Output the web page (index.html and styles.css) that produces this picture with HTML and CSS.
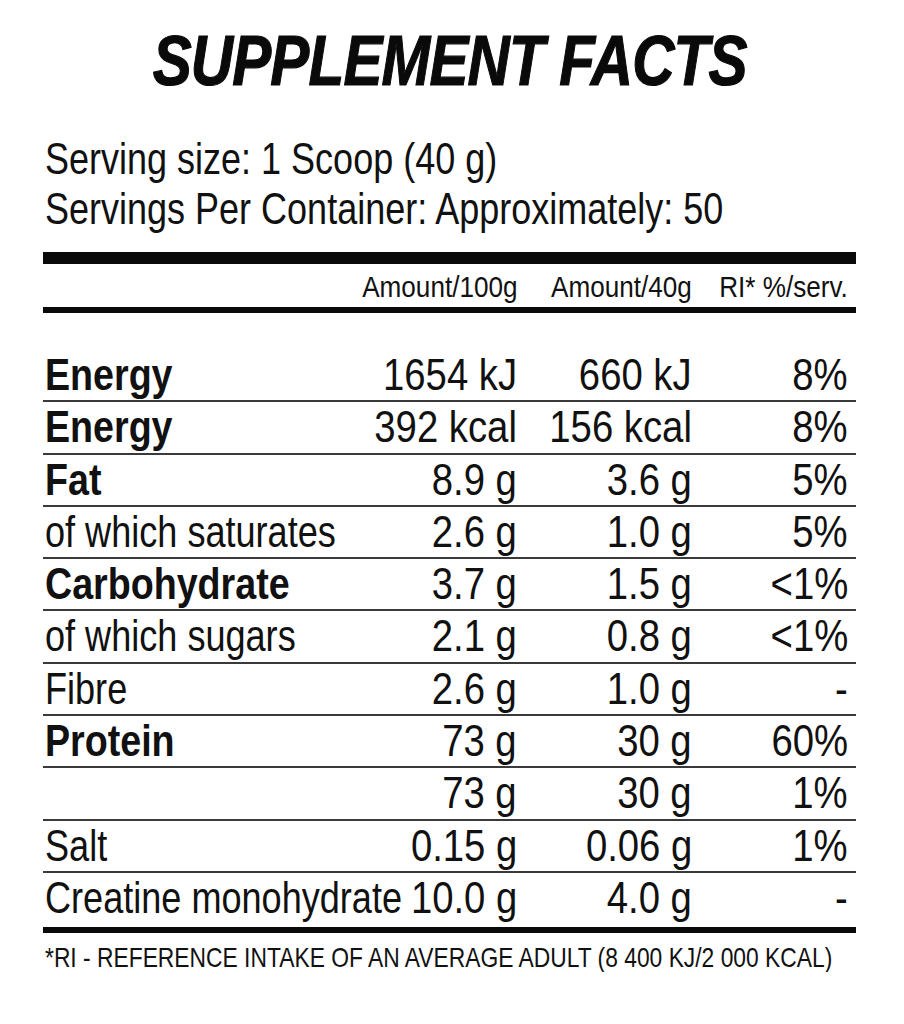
FILE: index.html
```html
<!DOCTYPE html>
<html lang="en">
<head>
<meta charset="utf-8">
<title>Supplement Facts</title>
<link rel="stylesheet" href="styles.css">
</head>
<body>
<div class="label">
  <h1 class="title"><span class="t">SUPPLEMENT FACTS</span></h1>
  <div class="serving">
    <p><span class="t">Serving size: 1 Scoop (40 g)</span></p>
    <p><span class="t">Servings Per Container: Approximately: 50</span></p>
  </div>
  <div class="facts">
    <div class="row head">
      <span class="name"></span>
      <span class="val"><span class="t">Amount/100g</span></span>
      <span class="val"><span class="t">Amount/40g</span></span>
      <span class="val"><span class="t">RI* %/serv.</span></span>
    </div>
    <div class="body">
      <div class="row"><span class="name b"><span class="t">Energy</span></span><span class="val"><span class="t">1654 kJ</span></span><span class="val"><span class="t">660 kJ</span></span><span class="val"><span class="t">8%</span></span></div>
      <div class="row"><span class="name b"><span class="t">Energy</span></span><span class="val"><span class="t">392 kcal</span></span><span class="val"><span class="t">156 kcal</span></span><span class="val"><span class="t">8%</span></span></div>
      <div class="row"><span class="name b"><span class="t">Fat</span></span><span class="val"><span class="t">8.9 g</span></span><span class="val"><span class="t">3.6 g</span></span><span class="val"><span class="t">5%</span></span></div>
      <div class="row"><span class="name"><span class="t">of which saturates</span></span><span class="val"><span class="t">2.6 g</span></span><span class="val"><span class="t">1.0 g</span></span><span class="val"><span class="t">5%</span></span></div>
      <div class="row"><span class="name b"><span class="t">Carbohydrate</span></span><span class="val"><span class="t">3.7 g</span></span><span class="val"><span class="t">1.5 g</span></span><span class="val"><span class="t">&lt;1%</span></span></div>
      <div class="row"><span class="name"><span class="t">of which sugars</span></span><span class="val"><span class="t">2.1 g</span></span><span class="val"><span class="t">0.8 g</span></span><span class="val"><span class="t">&lt;1%</span></span></div>
      <div class="row"><span class="name"><span class="t">Fibre</span></span><span class="val"><span class="t">2.6 g</span></span><span class="val"><span class="t">1.0 g</span></span><span class="val"><span class="t">-</span></span></div>
      <div class="row"><span class="name b"><span class="t">Protein</span></span><span class="val"><span class="t">73 g</span></span><span class="val"><span class="t">30 g</span></span><span class="val"><span class="t">60%</span></span></div>
      <div class="row"><span class="name"></span><span class="val"><span class="t">73 g</span></span><span class="val"><span class="t">30 g</span></span><span class="val"><span class="t">1%</span></span></div>
      <div class="row"><span class="name"><span class="t">Salt</span></span><span class="val"><span class="t">0.15 g</span></span><span class="val"><span class="t">0.06 g</span></span><span class="val"><span class="t">1%</span></span></div>
      <div class="row last"><span class="name"><span class="t">Creatine monohydrate</span></span><span class="val"><span class="t">10.0 g</span></span><span class="val"><span class="t">4.0 g</span></span><span class="val"><span class="t">-</span></span></div>
    </div>
  </div>
  <p class="note"><span class="t">*RI - REFERENCE INTAKE OF AN AVERAGE ADULT (8 400 KJ/2 000 KCAL)</span></p>
</div>
</body>
</html>
```

FILE: styles.css
```css
html, body {
  margin: 0;
  padding: 0;
  background: #ffffff;
}

body {
  color: #111111;
  font-family: "Liberation Sans", Arial, sans-serif;
}

.label {
  width: 813px;
  margin-left: 43px;
  overflow: hidden;
}

/* condensed look: horizontally squeezed Helvetica-metric text */
.t {
  display: inline-block;
  white-space: nowrap;
  transform: scaleX(var(--sx, 0.82));
  transform-origin: left center;
}

.val .t {
  transform-origin: right center;
}

.title {
  margin: 26px 0 0;
  font-size: 70px;
  line-height: 70px;
  font-weight: 700;
  font-style: italic;
  text-align: center;
  letter-spacing: -1px;
  color: #0a0a0a;
  white-space: nowrap;
}

.title .t {
  --sx: 0.835;
  transform-origin: center center;
  -webkit-text-stroke: 1.2px #0a0a0a;
}

.serving {
  margin-top: 38px;
  padding-left: 2px;
}

.serving p {
  margin: 0;
  font-size: 45px;
  line-height: 50px;
  white-space: nowrap;
}

.serving .t {
  --sx: 0.80;
}

.facts {
  margin-top: 18px;
  border-top: 12px solid #0a0a0a;
}

.row {
  display: grid;
  grid-template-columns: minmax(0, 1fr) 200px 175px 156px;
  padding: 0 8px 0 2px;
  align-items: baseline;
}

.val {
  text-align: right;
  white-space: nowrap;
}

.name {
  white-space: nowrap;
}

.head {
  font-size: 30px;
  line-height: 30px;
  padding-top: 8px;
  padding-bottom: 5px;
  border-bottom: 6px solid #0a0a0a;
}

.head .t {
  --sx: 0.87;
}

.body {
  margin-top: 37px;
}

.body .row {
  font-size: 44px;
  line-height: 50.3px;
  border-bottom: 2px solid #3a3a3a;
}

.body .name .t {
  --sx: 0.82;
}

.body .val .t {
  --sx: 0.87;
}

.body .row.last {
  min-height: 54px;
  border-bottom: 6px solid #0a0a0a;
}

.b {
  font-weight: 700;
}

.body .b .t {
  --sx: 0.855;
}

.note {
  margin: 11px 0 0;
  padding-left: 2px;
  font-size: 27.5px;
  line-height: 28px;
  white-space: nowrap;
}

.note .t {
  --sx: 0.83;
}
```
